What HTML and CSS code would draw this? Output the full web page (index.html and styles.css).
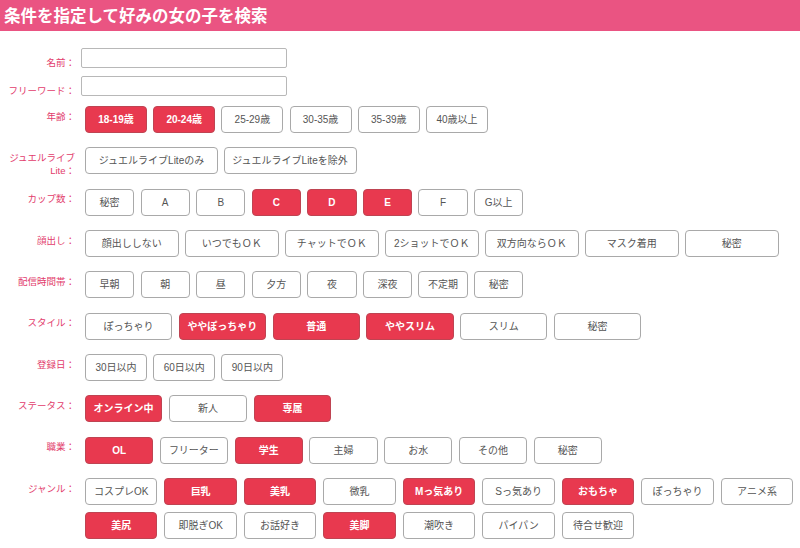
FILE: index.html
```html
<!DOCTYPE html>
<html lang="ja">
<head>
<meta charset="utf-8">
<title>条件を指定して好みの女の子を検索</title>
<link rel="stylesheet" href="styles.css">
</head>
<body>
<h1 class="page-title">条件を指定して好みの女の子を検索</h1>
<form class="search-form">
  <div class="text-fields">
    <div class="field field--text">
      <div class="field-label">名前：</div>
      <input class="text-input" type="text">
    </div>
    <div class="field field--text">
      <div class="field-label">フリーワード：</div>
      <input class="text-input" type="text">
    </div>
  </div>

  <div class="field">
    <div class="field-label">年齢：</div>
    <div class="options options--age">
      <button type="button" class="opt is-on">18-19歳</button>
      <button type="button" class="opt is-on">20-24歳</button>
      <button type="button" class="opt">25-29歳</button>
      <button type="button" class="opt">30-35歳</button>
      <button type="button" class="opt">35-39歳</button>
      <button type="button" class="opt">40歳以上</button>
    </div>
  </div>

  <div class="field">
    <div class="field-label field-label--wrap">ジュエルライブ<br>Lite：</div>
    <div class="options options--lite">
      <button type="button" class="opt">ジュエルライブLiteのみ</button>
      <button type="button" class="opt">ジュエルライブLiteを除外</button>
    </div>
  </div>

  <div class="field">
    <div class="field-label">カップ数：</div>
    <div class="options options--small">
      <button type="button" class="opt">秘密</button>
      <button type="button" class="opt">A</button>
      <button type="button" class="opt">B</button>
      <button type="button" class="opt is-on">C</button>
      <button type="button" class="opt is-on">D</button>
      <button type="button" class="opt is-on">E</button>
      <button type="button" class="opt">F</button>
      <button type="button" class="opt">G以上</button>
    </div>
  </div>

  <div class="field">
    <div class="field-label">顔出し：</div>
    <div class="options options--face">
      <button type="button" class="opt">顔出ししない</button>
      <button type="button" class="opt">いつでもＯＫ</button>
      <button type="button" class="opt">チャットでＯＫ</button>
      <button type="button" class="opt">2ショットでＯＫ</button>
      <button type="button" class="opt">双方向ならＯＫ</button>
      <button type="button" class="opt">マスク着用</button>
      <button type="button" class="opt">秘密</button>
    </div>
  </div>

  <div class="field">
    <div class="field-label">配信時間帯：</div>
    <div class="options options--small">
      <button type="button" class="opt">早朝</button>
      <button type="button" class="opt">朝</button>
      <button type="button" class="opt">昼</button>
      <button type="button" class="opt">夕方</button>
      <button type="button" class="opt">夜</button>
      <button type="button" class="opt">深夜</button>
      <button type="button" class="opt">不定期</button>
      <button type="button" class="opt">秘密</button>
    </div>
  </div>

  <div class="field">
    <div class="field-label">スタイル：</div>
    <div class="options options--style">
      <button type="button" class="opt">ぽっちゃり</button>
      <button type="button" class="opt is-on">ややぽっちゃり</button>
      <button type="button" class="opt is-on">普通</button>
      <button type="button" class="opt is-on">ややスリム</button>
      <button type="button" class="opt">スリム</button>
      <button type="button" class="opt">秘密</button>
    </div>
  </div>

  <div class="field">
    <div class="field-label">登録日：</div>
    <div class="options options--age">
      <button type="button" class="opt">30日以内</button>
      <button type="button" class="opt">60日以内</button>
      <button type="button" class="opt">90日以内</button>
    </div>
  </div>

  <div class="field">
    <div class="field-label">ステータス：</div>
    <div class="options options--status">
      <button type="button" class="opt is-on">オンライン中</button>
      <button type="button" class="opt">新人</button>
      <button type="button" class="opt is-on">専属</button>
    </div>
  </div>

  <div class="field">
    <div class="field-label">職業：</div>
    <div class="options options--job">
      <button type="button" class="opt is-on">OL</button>
      <button type="button" class="opt">フリーター</button>
      <button type="button" class="opt is-on">学生</button>
      <button type="button" class="opt">主婦</button>
      <button type="button" class="opt">お水</button>
      <button type="button" class="opt">その他</button>
      <button type="button" class="opt">秘密</button>
    </div>
  </div>

  <div class="field">
    <div class="field-label">ジャンル：</div>
    <div class="options options--genre">
      <button type="button" class="opt">コスプレOK</button>
      <button type="button" class="opt is-on">巨乳</button>
      <button type="button" class="opt is-on">美乳</button>
      <button type="button" class="opt">微乳</button>
      <button type="button" class="opt is-on">Mっ気あり</button>
      <button type="button" class="opt">Sっ気あり</button>
      <button type="button" class="opt is-on">おもちゃ</button>
      <button type="button" class="opt">ぽっちゃり</button>
      <button type="button" class="opt">アニメ系</button>
      <button type="button" class="opt is-on">美尻</button>
      <button type="button" class="opt">即脱ぎOK</button>
      <button type="button" class="opt">お話好き</button>
      <button type="button" class="opt is-on">美脚</button>
      <button type="button" class="opt">潮吹き</button>
      <button type="button" class="opt">パイパン</button>
      <button type="button" class="opt">待合せ歓迎</button>
    </div>
  </div>
</form>
</body>
</html>
```

FILE: styles.css
```css
* {
  box-sizing: border-box;
}

body {
  margin: 0;
  background: #fff;
  font-family: "Liberation Sans", "Noto Sans CJK JP", sans-serif;
  overflow: hidden;
}

.page-title {
  margin: 0;
  height: 31px;
  line-height: 31px;
  padding-left: 4px;
  background: #ea5482;
  color: #fff;
  font-family: "Noto Sans CJK JP", sans-serif;
  font-size: 16.5px;
  font-weight: bold;
  white-space: nowrap;
}

.search-form {
  padding-top: 17px;
}

.text-fields {
  display: flex;
  flex-direction: column;
  gap: 8px;
  margin-bottom: 10px;
}

.field {
  display: grid;
  grid-template-columns: 75px 1fr;
  column-gap: 10px;
  align-items: start;
  margin-bottom: 14.35px;
}

.field--text {
  column-gap: 6px;
  margin-bottom: 0;
}

.field-label {
  text-align: right;
  color: #e23c6c;
  font-family: "Liberation Sans", "Noto Sans CJK JP", sans-serif;
  font-size: 9.5px;
  line-height: 13px;
  padding-top: 3.5px;
  white-space: nowrap;
}

.field--text .field-label {
  padding-top: 8px;
  margin-bottom: -1px;
}

.field-label--wrap {
  margin-bottom: -3px;
}

.text-input {
  width: 206px;
  height: 20px;
  margin: 0;
  padding: 0 4px;
  border: 1px solid #b8b8b8;
  border-radius: 2px;
  background: #fff;
  font: inherit;
  font-size: 11px;
}

.options {
  display: flex;
  flex-wrap: wrap;
  column-gap: var(--gap);
  row-gap: 7px;
}

.opt {
  width: var(--w);
  height: 27px;
  margin: 0;
  padding: 0;
  border: 1px solid #a9a9a9;
  border-radius: 4px;
  background: #fff;
  color: #555;
  font-family: "Liberation Sans", "Noto Sans CJK JP", sans-serif;
  font-size: 10px;
  line-height: 25px;
  text-align: center;
  white-space: nowrap;
}

.opt.is-on {
  background: #e8394f;
  border-color: #bf4452;
  color: #fff;
  font-weight: bold;
}

.options--age { --w: 62px; --gap: 6.2px; }
.options--lite { --w: 133px; --gap: 5.5px; }
.options--small { --w: 49.2px; --gap: 6.4px; }
.options--face { --w: 93.5px; --gap: 6.5px; }
.options--style { --w: 87.2px; --gap: 6.6px; }
.options--status { --w: 77.2px; --gap: 7.3px; }
.options--job { --w: 68.2px; --gap: 6.6px; }
.options--genre { --w: 72.3px; --gap: 7.2px; }
```
